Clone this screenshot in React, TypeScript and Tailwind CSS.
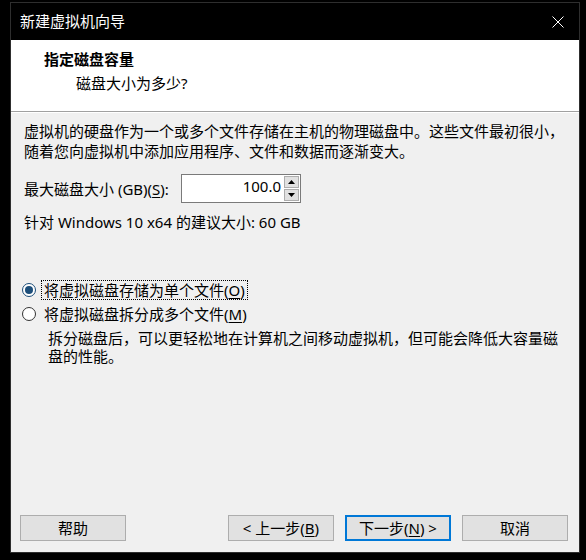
import React from "react";

const font = "font-['Noto_Sans','Noto_Sans_CJK_SC',sans-serif]";

function Mn({ c }: { c: string }) {
  return <span className="underline underline-offset-2">{c}</span>;
}

function Radio({ checked }: { checked?: boolean }) {
  return (
    <span
      className={
        "flex h-[14px] w-[14px] shrink-0 items-center justify-center rounded-full border bg-white " +
        (checked ? "border-[#1c4e7a]" : "border-[#333333]")
      }
    >
      {checked && <span className="h-[8px] w-[8px] rounded-full bg-[#1c4e7a]" />}
    </span>
  );
}

function Btn({ children, primary }: { children: React.ReactNode; primary?: boolean }) {
  return (
    <button
      className={
        "flex h-[26px] w-[106px] items-center justify-center bg-[#e1e1e1] text-[15px] leading-none text-black " +
        (primary ? "border-2 border-[#0078d7]" : "border border-[#adadad]")
      }
    >
      {children}
    </button>
  );
}

export default function App() {
  return (
    <div className={`h-[560px] w-[586px] overflow-hidden bg-black pl-[10px] pt-[2px] ${font}`}>
      <div className="flex h-[551px] w-[570px] flex-col border border-[#2e2e2e]">
        {/* title bar */}
        <div className="flex h-[37px] shrink-0 items-center justify-between bg-black pl-[9px] pr-[14px]">
          <span className="text-[15px] leading-none text-white">新建虚拟机向导</span>
          <svg width="12" height="12" viewBox="0 0 12 12" className="mr-[1px]">
            <path d="M0.5 0.5 L11.5 11.5 M11.5 0.5 L0.5 11.5" stroke="#ffffff" strokeWidth="1" />
          </svg>
        </div>

        {/* header */}
        <div className="h-[72px] shrink-0 border-b border-[#a0a0a0] bg-white pl-[33px] pt-[9px]">
          <div className="text-[15px] font-bold leading-[20px] text-black">指定磁盘容量</div>
          <div className="pl-[32px] pt-[4px] text-[15px] leading-[20px] text-black">磁盘大小为多少?</div>
        </div>

        {/* body */}
        <div className="flex flex-1 flex-col border-t border-white bg-[#f0f0f0] pb-[11px] pl-[9px] pr-[11px] text-[15px] text-black">
          <div className="pl-[4px] pt-[8px] leading-[20px]">
            虚拟机的硬盘作为一个或多个文件存储在主机的物理磁盘中。这些文件最初很小，
            <br />
            随着您向虚拟机中添加应用程序、文件和数据而逐渐变大。
          </div>

          <div className="mt-[13px] flex items-center pl-[4px]">
            <span className="w-[157px] leading-[20px]">
              最大磁盘大小 (GB)(<Mn c="S" />):
            </span>
            <div className="flex h-[29px] w-[120px] items-stretch border border-[#7a7a7a] bg-white">
              <div className="flex flex-1 items-start justify-end pr-[3px] pt-[1px] leading-[20px]">100.0</div>
              <div className="flex w-[16px] flex-col gap-[1px] p-[1px] pl-0">
                <div className="flex flex-1 items-center justify-center border border-[#adadad] bg-[#e1e1e1]">
                  <svg width="7" height="4" viewBox="0 0 7 4"><path d="M3.5 0 L7 4 L0 4 Z" fill="#000" /></svg>
                </div>
                <div className="flex flex-1 items-center justify-center border border-[#adadad] bg-[#e1e1e1]">
                  <svg width="7" height="4" viewBox="0 0 7 4"><path d="M0 0 L7 0 L3.5 4 Z" fill="#000" /></svg>
                </div>
              </div>
            </div>
          </div>

          <div className="mt-[9px] pl-[4px] leading-[20px]">针对 Windows 10 x64 的建议大小: 60 GB</div>

          <div className="mt-[48px] flex items-center gap-[5px] pl-[2px]">
            <Radio checked />
            <span className="border border-dotted border-black px-[2px] leading-[18px]">
              将虚拟磁盘存储为单个文件(<Mn c="O" />)
            </span>
          </div>
          <div className="mt-[4px] flex items-center gap-[5px] pl-[2px]">
            <Radio />
            <span className="px-[3px] leading-[20px]">
              将虚拟磁盘拆分成多个文件(<Mn c="M" />)
            </span>
          </div>
          <div className="mt-[5px] pl-[28px] leading-[18px]">
            拆分磁盘后，可以更轻松地在计算机之间移动虚拟机，但可能会降低大容量磁
            <br />
            盘的性能。
          </div>

          <div className="mt-auto flex items-center">
            <Btn>帮助</Btn>
            <div className="ml-auto flex gap-[11px]">
              <Btn>
                &lt; 上一步(<Mn c="B" />)
              </Btn>
              <Btn primary>
                下一步(<Mn c="N" />) &gt;
              </Btn>
              <Btn>取消</Btn>
            </div>
          </div>
        </div>
      </div>
    </div>
  );
}
